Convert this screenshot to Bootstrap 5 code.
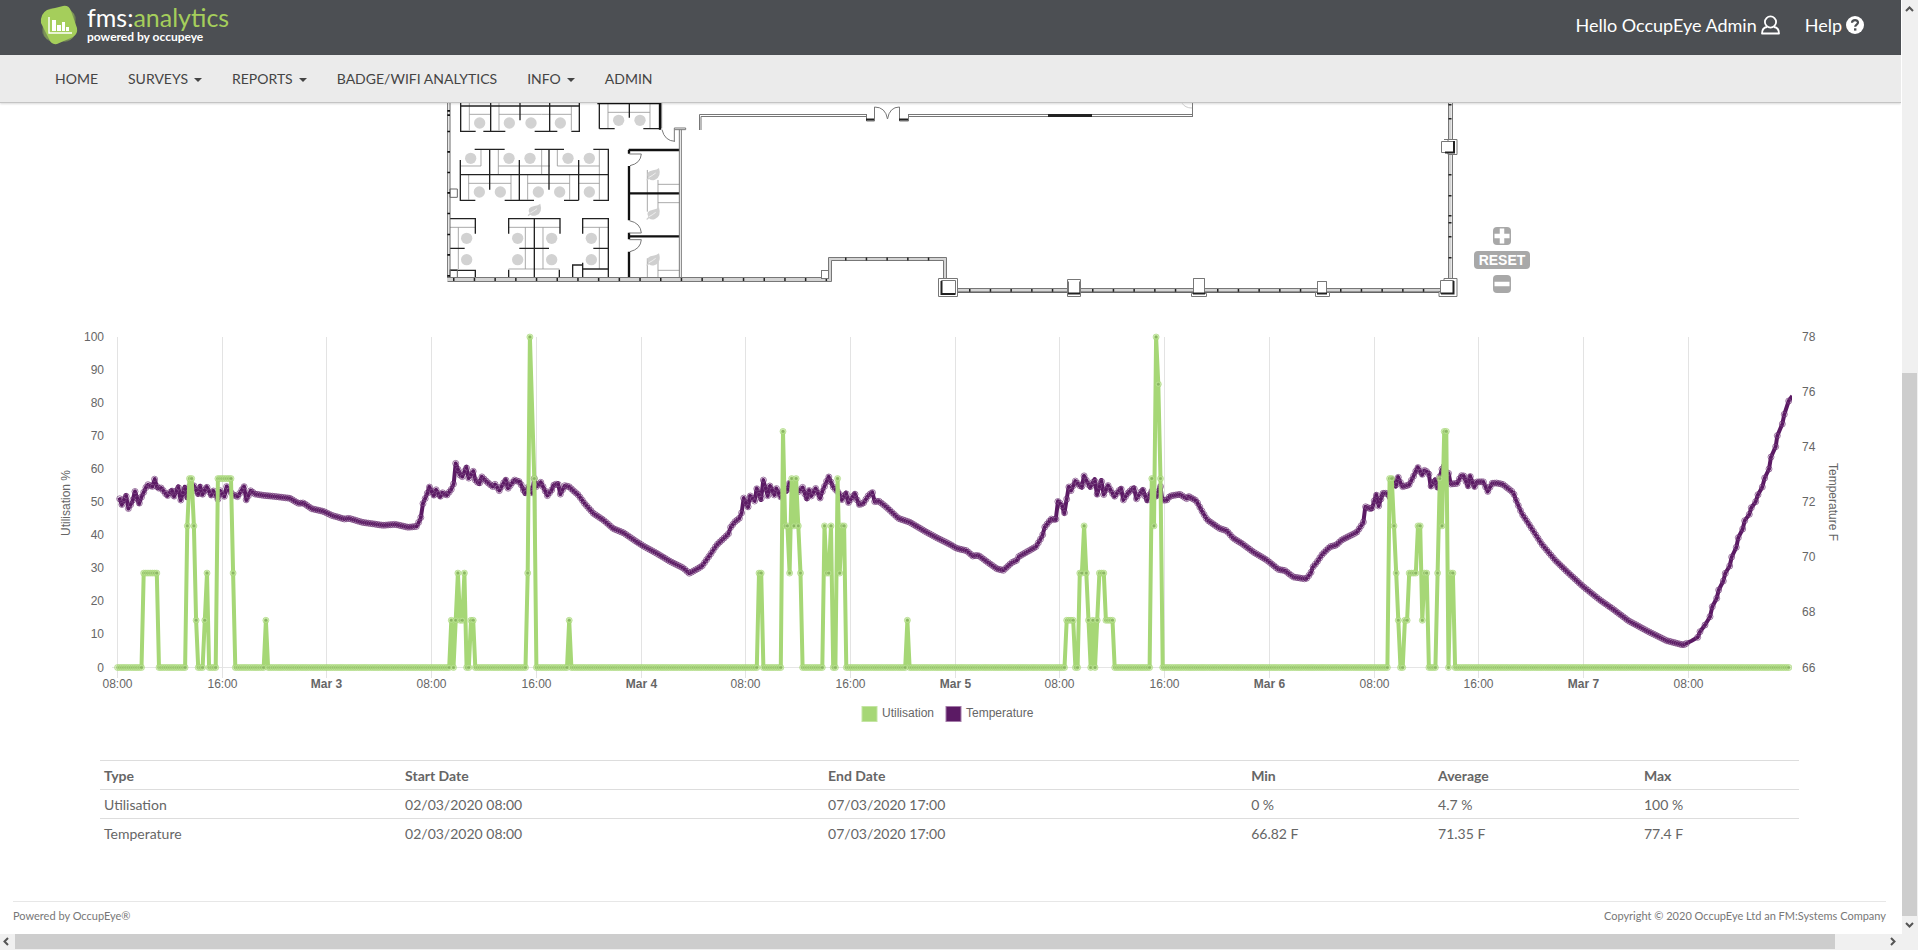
<!DOCTYPE html>
<html lang="en">
<head>
<meta charset="utf-8">
<meta name="viewport" content="width=device-width, initial-scale=1">
<title>fms:analytics</title>
<link rel="stylesheet" href="https://cdn.jsdelivr.net/npm/bootstrap@5.3.0/dist/css/bootstrap.min.css">
<style>
body { font-family: Lato, sans-serif; font-size: 14px; line-height: 20px; color: #666; background: #fff; }
a { text-decoration: none; }
.page-col { min-width: 0; }
.topbar { height: 55px; background: #4c4f53; padding: 0 37px 0 40px; }
.topbar a { color: #fff; font-size: 18px; line-height: 24px; }
.topbar .user-links { height: 49px; gap: 25px; }
.brand-box { gap: 9px; height: 50px; }
.brand-title { font-size: 25px; line-height: 24px; }
.brand-title span { color: #a5ce5b; }
.brand-sub { font-size: 12px; line-height: 16px; font-weight: 700; }
.mainnav { height: 48px; background: #ebebeb; border-bottom: 1px solid #c4c4c4; box-shadow: 0 1px 2px rgba(0,0,0,.15); padding: 0 40px; }
.mainnav .nav-link { color: #444; padding: 0 15px; line-height: 47px; }
.mainnav .dropdown-toggle::after { border-top-width: 4px; border-left-width: 4px; border-right-width: 4px; margin-left: 6px; vertical-align: 2px; }
.plan-row { display: grid; grid-template-columns: 445fr 1013fr 88fr 355fr; }
.plan-row svg { grid-column: 2; width: 100%; height: auto; display: block; }
.zoom-tools { grid-column: 3; gap: 6px; padding-bottom: 17px; }
.zoom-tools button { border: 0; background: #a8a8a8; color: #fff; border-radius: 4px; padding: 0; width: 18px; height: 18px; display: flex; align-items: center; justify-content: center; }
.zoom-tools .reset-btn { width: 56px; font: bold 14px/18px "Liberation Sans", sans-serif; }
.chart-box svg { width: 100%; height: auto; display: block; font: 12px "Liberation Sans", sans-serif; fill: #666; }
.table-box { padding: 0 102px 0 100px; margin-top: 20px; }
.stats { margin: 0; color: #666; table-layout: fixed; border-color: #ddd; }
.stats th, .stats td { padding: 5px 4px 3px; border: 0; border-top: 1px solid #ddd; }
.stats th { font-weight: 700; }
.c-type { width: 17.72%; } .c-date { width: 24.9%; } .c-min { width: 11%; } .c-avg { width: 12.12%; }
.foot { margin: 0 15px 0 13px; border-top: 1px solid #e7e7e7; height: 33px; font-size: 11px; line-height: 28px; color: #777; }
.vbar { width: 17px; background: #f0f0f0; border-left: 1px solid #fff; }
.vthumb { background: #cdcdcd; width: 15px; }
.hbar { height: 16px; background: #f0f0f0; }
.hthumb { background: #cdcdcd; height: 15px; flex: 1820; }
.hrest { flex: 50; }
</style>
</head>
<body>
<div class="d-flex flex-column vh-100 overflow-hidden">
<div class="d-flex flex-grow-1">
<div class="page-col d-flex flex-column flex-grow-1">
  <header class="topbar d-flex justify-content-between">
    <a href="#" class="brand-box d-flex align-items-center">
      <svg width="38" height="40" viewBox="0 0 38 40" aria-hidden="true">
        <g fill="#a5ce5b">
          <rect x="3" y="4" width="32" height="32" rx="9" opacity=".3" transform="rotate(8 19 20)"/>
          <rect x="3" y="4" width="32" height="32" rx="9" opacity=".35" transform="rotate(-4 19 20)"/>
          <path d="M7 5 23 1q6-1 8 5l6 17q1 6-4 9l-16 7q-6 1-8-5L1 18Q0 9 7 5z"/>
        </g>
        <path d="M9 12v16h23" fill="none" stroke="#fff" stroke-width="1.4"/>
        <path d="M12 15h4v11h-4zM17 20h4v6h-4zM22 17h3v9h-3zM26 22h3v4h-3z" fill="#fff"/>
      </svg>
      <span class="d-flex flex-column">
        <span class="brand-title">fms:<span>analytics</span></span>
        <span class="brand-sub">powered by occupeye</span>
      </span>
    </a>
    <div class="user-links d-flex align-items-center justify-content-end">
      <a href="#" class="d-flex align-items-center gap-1">Hello OccupEye Admin
        <svg width="19" height="20" viewBox="0 0 19 20" fill="none" stroke="#fff" stroke-width="1.8" stroke-linejoin="round" aria-hidden="true"><circle cx="9.5" cy="7" r="5.6"/><path d="M6 12C2.5 12.500 1 15 1 18.500h17c0-3.500-1.500-6-5-6.500"/></svg></a>
      <a href="#" class="d-flex align-items-center gap-1">Help
        <svg width="18" height="18" viewBox="0 0 18 18" aria-hidden="true"><circle cx="9" cy="9" r="9" fill="#fff"/><path d="M6 6.700C6.200 3.300 12 3.400 12 6.500 12 8.600 9.200 8.500 9.200 10.800" fill="none" stroke="#4c4f53" stroke-width="2.200"/><path d="M8 12.300h2.400v2.300H8z" fill="#4c4f53"/></svg></a>
    </div>
  </header>
  <nav class="mainnav nav flex-nowrap">
    <a class="nav-link" href="#">HOME</a>
    <a class="nav-link dropdown-toggle" href="#">SURVEYS</a>
    <a class="nav-link dropdown-toggle" href="#">REPORTS</a>
    <a class="nav-link" href="#">BADGE/WIFI ANALYTICS</a>
    <a class="nav-link dropdown-toggle" href="#">INFO</a>
    <a class="nav-link" href="#">ADMIN</a>
  </nav>

  <main class="flex-grow-1">
    <section class="plan-row">
      <svg viewBox="445 103 1013 207" role="img" aria-label="Floor plan" id="plan">
        <g transform="translate(430 95) scale(.33333)" fill="none">
          <g stroke="#999" stroke-width="2.500">
            <path d="M118 24V106M118 58H182M207 24V106M207 58H335M335 58H424M424 34V106M534 24V100M534 52H660M660 24V100"/>
            <path d="M153 165V213M92 213H153M205 165V238M205 213H360M335 165V238M382 165V213M382 213H508M508 165V238"/>
            <path d="M116 240V314M116 265H243M243 240V314M293 240V314M293 265H419M419 240V314M446 265H508M508 240V314"/>
            <path d="M60 397H136M85 397V522M236 397H390M286 397V522M339 397V522M458 397H535M508 397V522M236 522H388"/>
            <path d="M652 225V350M684 255V345M652 490V548M684 500V548M684 268H748M684 323H748M684 526H748"/>
          </g>
          <g stroke="#222" stroke-width="4">
            <path d="M92 24V109H137M92 33H448M182 24V109M160 109H226M270 24V76M314 109H358M359 24V109H382M424 109H448V24"/>
            <path d="M508 101H554M508 24V101M598 24V68M640 101H690"/>
            <path d="M134 163H224M314 163H402M490 163H535V316H490M179 165V284M268 195V316M357 165V284M446 195V316M91 195V316H136M91 239H535M224 316H312M402 316H446"/>
            <path d="M60 371H136V416M236 416V371H390V416M313 371V548M458 416V371H535V548M60 460H104M268 460H357M490 460H535M60 526H136V548M236 548V524M388 524V548M428 548V510H458M458 503V548M458 522H535"/>
          </g>
          <path d="M502 24H690V104M596 165H748M596 295H748M596 424H748M597 165V176M597 213V376M597 413V433M597 470V548" stroke="#111" stroke-width="7"/>
          <g stroke="#777" stroke-width="3">
            <path d="M695 24V100M733 104V139M696 104Q704 138 735 139M598 177H634Q632 205 600 212M598 414H634Q632 384 598 377M598 434H634Q632 462 600 470"/>
            <path d="M53 22V558M60 22V548M60 282h22v25h-22zM60 524h22v24h-22z" stroke="#666"/>
            <path d="M748 104V548M754 104V548M733 99h34v5h-34z"/>
          </g>
          <g fill="#d2d2d2" id="seats"></g>
          <g fill="#cfcfcf" id="leaves"></g>
          <path d="M56 45v5M56 58v5M56 107v5M56 168v5M56 230v5M56 291v5M56 353v5M56 416v5M56 477v5M56 540v5" stroke="#111" stroke-width="8"/>
        </g>
        <path d="M447 279.500H830V259H945V290.500H1450V103" fill="none" stroke="#d4d4d4" stroke-width="3"/>
        <g fill="none" stroke="#777">
          <path d="M447.500 277.500H828.500V257.500H946.500V288.500H1448.500V103M447.500 281.500H831.500V260.500H943.500V292.500H1452.500V103"/>
          <path d="M699.500 130V114.500H866M701 130V116.500H866M866.500 114v7h8v-14q11 0 13 12q2-12 12-12v14h9v-7M908 114.500H1192M908 116.500H1192M1192.500 103V117"/>
          <path d="M1182 103q3 5 10 5" stroke="#ccc"/>
        </g>
        <g fill="none" stroke="#222" stroke-width="3"><path d="M1048 115.500H1092"/><path d="M866 119.500h8M899 119.500h9" stroke-width="2"/></g>
        <path d="M453 279.500H828M845 259H941M969 290.500H1060M1092 290.500H1190M1217 290.500H1312M1340 290.500H1438" fill="none" stroke="#222" stroke-width="3" stroke-dasharray="1.500 19.200"/>
        <path d="M1450 104v1.500M1450 118v1.500M1450 174v1.500M1450 195v1.500M1450 215v1.500M1450 222v1.500M1450 236v1.500M1450 257v1.500" fill="none" stroke="#222" stroke-width="3"/>
        <path d="M957 292H1440" stroke="#555"/>
        <g fill="#fff" stroke="#777">
          <path d="M938.500 278.500h19v18h-19zM1067.500 279.500h13v17h-13zM1193.500 278.500h11v15h2v3h-15v-3h2zM1317.500 281.500h9v11h3v4h-14v-4h2zM1444 278.500h13v18h-18v-5h5zM1444 139.500h13v15h-9v-15"/>
          <rect x="821.500" y="270.500" width="7" height="8"/>
        </g>
        <g fill="#fff" stroke="#777">
          <path d="M941.500 280.500h14v13h-14zM1068.500 281.500v12h11v-12M1193.500 278.500v15h11v-15zM1317.500 281.500v12h9v-12zM1440.500 280.500h13v13h-13zM1441.500 141.500h12v11h-12z"/>
        </g>
        <path d="M941.500 281v13h14M1068 293.500h12M1193 293.500h12M1317 293.500h10M1441 293.500h12.500V281M1445 152.500h9V141" fill="none" stroke="#222" stroke-width="2"/>
      </svg>
      <div class="zoom-tools d-flex flex-column align-items-center justify-content-end">
        <button type="button" aria-label="Zoom in"><svg width="12" height="12" viewBox="0 0 12 12"><path d="M6 1v10M1 6h10" stroke="#fff" stroke-width="3"/></svg></button>
        <button type="button" class="reset-btn">RESET</button>
        <button type="button" aria-label="Zoom out"><svg width="12" height="12" viewBox="0 0 12 12"><path d="M1 6h10" stroke="#fff" stroke-width="3"/></svg></button>
      </div>
    </section>

    <section class="chart-box">
      <svg viewBox="0 310 1901 430" id="chart" role="img" aria-label="Utilisation and temperature">
        <defs>
          <clipPath id="plot"><rect x="112" y="330" width="1680" height="345"/></clipPath>
          <g id="dot-g"><circle r="3" fill="#a6d776" fill-opacity=".5" stroke="#a6d776" stroke-opacity=".6"/><circle r="2.200" fill="none" stroke="#fff" stroke-opacity=".2" stroke-width=".8"/><circle r="1.300" fill="#6e9150" fill-opacity=".5"/></g>
          <g id="dot-t"><circle r="3" fill="none" stroke="#5b1a64" stroke-opacity=".6"/><circle r="2.200" fill="none" stroke="#fff" stroke-opacity=".2" stroke-width=".8"/><circle r="1.500" fill="#5b1a64"/></g>
        </defs>
        <g id="axes"></g>
        <g clip-path="url(#plot)"><g id="series"></g></g>
        <rect x="862" y="706.500" width="15" height="15" fill="#a6d776" stroke="#c4e5a3"/>
        <text x="882" y="717">Utilisation</text>
        <rect x="946" y="706.500" width="15" height="15" fill="#5b1a64" stroke="#a47ba9"/>
        <text x="966" y="717">Temperature</text>
      </svg>
    </section>

    <section class="table-box">
      <table class="table stats">
        <colgroup><col class="c-type"><col class="c-date"><col class="c-date"><col class="c-min"><col class="c-avg"><col></colgroup>
        <thead><tr><th>Type</th><th>Start Date</th><th>End Date</th><th>Min</th><th>Average</th><th>Max</th></tr></thead>
        <tbody>
          <tr><td>Utilisation</td><td>02/03/2020 08:00</td><td>07/03/2020 17:00</td><td>0 %</td><td>4.7 %</td><td>100 %</td></tr>
          <tr><td>Temperature</td><td>02/03/2020 08:00</td><td>07/03/2020 17:00</td><td>66.82 F</td><td>71.35 F</td><td>77.4 F</td></tr>
        </tbody>
      </table>
    </section>
  </main>
  <footer class="foot d-flex justify-content-between"><span>Powered by OccupEye®</span><span>Copyright © 2020 OccupEye Ltd an FM:Systems Company</span></footer>
</div>
<div class="vbar d-flex flex-column align-items-start flex-shrink-0" aria-hidden="true">
  <svg width="15" height="17" viewBox="0 0 15 17"><path d="M4 11l3.500-3.500L11 11" fill="none" stroke="#555" stroke-width="2"/></svg>
  <div style="flex:356"></div><div class="vthumb" style="flex:543"></div>
  <svg width="15" height="18" viewBox="0 0 15 18"><path d="M4 7l3.500 3.500L11 7" fill="none" stroke="#555" stroke-width="2"/></svg>
</div>
</div>
<div class="hbar d-flex" aria-hidden="true">
  <svg width="15" height="15" viewBox="0 0 15 15"><path d="M8 4L4.500 7.500 8 11" fill="none" stroke="#555" stroke-width="2"/></svg>
  <div class="hthumb"></div><div class="hrest"></div>
  <svg width="33" height="15" viewBox="0 0 33 15"><path d="M6 4l3.500 3.500L6 11" fill="none" stroke="#555" stroke-width="2"/></svg>
</div>
</div>
<script src="https://cdn.jsdelivr.net/npm/bootstrap@5.3.0/dist/js/bootstrap.bundle.min.js"></script>
<script>
// desks and meeting spaces on the floor plan
const seats = [[149,84],[238,84],[303,84],[391,84],[566,76],[630,76],[122,190],[237,190],[300,190],[414,190],[478,190],[148,291],[211,291],[325,291],[389,291],[478,291],[110,430],[110,494],[263,430],[263,494],[365,430],[365,494],[484,430],[484,494]];
document.getElementById('seats').innerHTML = seats.map(([x, y]) => `<circle cx="${x}" cy="${y}" r="17"/>`).join('');
document.getElementById('leaves').innerHTML = [[313,345],[669,238],[669,356],[669,494]].map(([x, y]) =>
  `<path transform="translate(${x} ${y})" d="M18-19Q26 8 6 16Q-4 20-12 14L-18 19L-20 16L-14 10Q-24-8 0-12Q12-14 18-19z"/><path transform="translate(${x} ${y})" d="M-12 9Q-2 4 8-4" stroke="#fff" stroke-width="2"/>`).join('');

// axes
const X0 = 117.5, STEP = 2.182, Y0 = 667.5, YH = 330.5;
let ax = '<path d="M112 667.500H1792" stroke="#e5e5e5" fill="none"/>';
for (let i = 0; i < 16; i++) {
  const x = Math.floor(X0 + i * 104.72) + .5, day = i % 3 === 2;
  ax += `<path d="M${x} 337V678" stroke="#e3e3e3"/><text x="${x}" y="688" text-anchor="middle"${day ? ' font-weight="bold"' : ''}>${day ? 'Mar ' + (3 + (i - 2) / 3) : i % 3 ? '16:00' : '08:00'}</text>`;
}
for (let v = 0; v <= 100; v += 10) ax += `<text x="104" y="${Math.round(Y0 - v * YH / 100) + 4}" text-anchor="end">${v}</text>`;
for (let t = 66; t <= 78; t += 2) ax += `<text x="1802" y="${Math.round(Y0 - (t - 66) * YH / 12) + 4}">${t}</text>`;
ax += '<text transform="translate(70 503) rotate(-90)" text-anchor="middle">Utilisation %</text><text transform="translate(1829 502) rotate(90)" text-anchor="middle">Temperature F</text>';
document.getElementById('axes').innerHTML = ax;

// temperature trace: [left edge, points in thirds of a pixel]
const trace = [
 [50, '208,533 215,555 228,525 235,566 247,545 255,514 267,552 274,532 288,502 294,494 307,500 314,477 322,505 334,504 352,528 365,510 372,530 385,499 392,541 404,500 411,535 418,500 431,496 444,524 450,497 457,524 470,500 483,527 490,512 497,525 503,540 510,512 523,530 530,499 537,512 549,524 563,530 582,499 589,541 602,512 615,522 640,526 680,530 720,535 745,550 760,549 785,566 820,574 845,586 883,597 897,595 937,607 1000,616 1035,613 1075,622 1100,619 1112,595 1119,550 1131,523 1138,500 1151,527 1158,509 1170,531 1177,518 1190,526 1204,508 1211,491 1217,430 1230,465 1237,470 1249,440 1256,475 1270,453 1276,480 1288,492 1295,470 1308,483 1328,500 1335,493 1348,512 1367,478 1374,505 1393,480'],
 [500, '60,486 75,522 84,500 96,520 103,474 109,500 122,486 135,512 142,527 155,510 160,496 174,490 181,523 194,497 207,500 220,512 235,525 255,552 280,580 310,600 340,626 370,638 405,662 430,678 470,700 510,724 550,744 568,760 595,745 607,737 630,705 650,675 685,642 692,622 705,605 718,595 725,578 731,534 744,562 750,527 764,543 770,505 783,540 790,480 803,528 810,497 823,525 829,505 842,532 850,510 860,515 868,488 882,520 895,515 908,502 920,538 927,510 934,528 947,505 960,535 967,514 986,470 999,500 1006,508 1018,520 1025,540 1038,518 1045,548 1058,530 1064,520 1077,554 1090,550 1104,528 1117,516 1124,545 1136,543 1160,562 1195,595 1230,607 1270,631 1310,653 1350,673 1370,685 1400,692'],
 [960, '38,708 55,706 92,733 110,746 130,751 155,728 172,720 176,710 228,680 247,648 254,622 273,597 287,600 294,543 306,556 313,581 326,500 333,512 346,483 365,503 372,467 390,503 404,477 411,525 424,480 431,524 444,496 463,530 483,504 490,540 503,520 522,502 529,537 548,508 561,543 574,512 590,530 601,496 607,540 620,541 630,528 660,523 680,536 685,529 709,542 725,572 742,600 780,626 800,632 820,655 845,670 880,696 920,720 955,748 975,752 1000,771 1038,777 1052,760 1058,742 1070,728 1085,705 1110,680 1128,676 1145,660 1190,637 1210,608 1216,560 1235,568 1249,523 1256,558 1268,520 1282,520 1288,535 1296,475 1307,500 1314,470 1327,500 1347,495 1360,470 1373,441 1386,465 1393,451 1406,458 1412,500 1425,478 1432,505'],
 [1400, '118,475 125,450 131,435 140,460 146,460 152,492 172,490 183,467 191,467 204,500 210,467 223,502 230,486 250,485 263,515 276,490 290,489 308,493 325,506 340,518 348,540 365,580 385,610 425,672 465,720 500,754 550,800 600,840 640,868 685,902 740,932 800,962 850,975 875,962 893,952 900,935 915,915 930,890 937,860 950,835 956,810 970,783 976,760 989,738 995,711 1009,682 1015,653 1028,627 1034,602 1048,583 1054,563 1067,545 1074,524 1087,501 1094,474 1107,447 1113,411 1127,380 1132,347 1147,312 1153,283 1166,243 1177,228']
];
const temp = trace.flatMap(([o, s]) => s.split(' ').map(p => { const [x, y] = p.split(',').map(Number); return [o + x / 3, 320 + y / 3]; }));
const use = (id, x, y) => `<use href="#${id}" x="${x.toFixed(1)}" y="${y.toFixed(1)}"/>`;
let dots = '', j = 0;
for (let k = 1; k < 720; k++) {
  const x = X0 + k * STEP;
  if (x < temp[0][0]) continue;
  while (j < temp.length - 2 && temp[j + 1][0] < x) j++;
  if (x > 1692) break;
  const [a, b] = [temp[j], temp[j + 1]];
  dots += use('dot-t', x, a[1] + (b[1] - a[1]) * (x - a[0]) / (b[0] - a[0]));
}
temp.filter(p => p[0] > 1692 && p[0] < 1791).forEach(p => dots += use('dot-t', p[0], p[1]));
let out = `<polyline points="${temp.map(p => p.map(n => n.toFixed(1)).join()).join(' ')}" fill="none" stroke="#5b1a64" stroke-width="4" stroke-linejoin="round"/>` + dots;

// utilisation: runs of [first sample, sevenths occupied per ten minutes]
const runs = [[12,'2222222'],[32,'344310001200'],[46,'44444442'],[68,'1'],[153,'10121120011'],[188,'27-4'],[207,'1'],[294,'22'],[305,'533243432'],[324,'3223004233'],[362,'1'],[435,'1111002232101012221111'],[474,'437640'],[583,'44321001122223312200002435502200']];
const util = new Array(767).fill('0');
runs.forEach(([s, v]) => [...v].forEach((c, i) => util[s + i] = c));
const up = [];
util.forEach((c, k) => { if (c !== '-') up.push([X0 + k * STEP, Y0 - c * YH / 7]); });
out += `<polyline points="${up.map(p => p.map(n => n.toFixed(1)).join()).join(' ')}" fill="none" stroke="#a6d776" stroke-width="4" stroke-linejoin="round"/>` + up.map(p => use('dot-g', p[0], p[1])).join('');
document.getElementById('series').innerHTML = out;
</script>
</body>
</html>
